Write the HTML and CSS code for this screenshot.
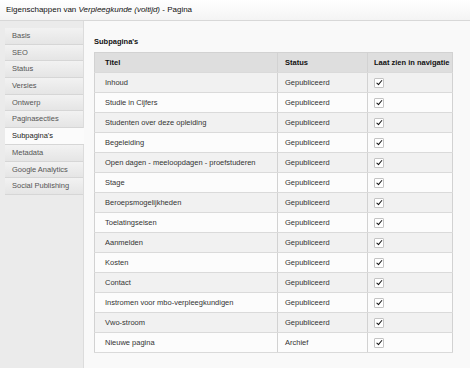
FILE: index.html
```html
<!DOCTYPE html>
<html lang="nl">
<head>
    <meta charset="UTF-8">
    <title>Eigenschappen van Verpleegkunde (voltijd) - Pagina</title>
    <link rel="stylesheet" href="styles.css">
</head>
<body>
    <div class="titlebar">Eigenschappen van <em>Verpleegkunde (voltijd)</em> - Pagina</div>

    <div class="main">
        <div class="sidebar">
            <div class="tab">Basis</div>
            <div class="tab">SEO</div>
            <div class="tab">Status</div>
            <div class="tab">Versies</div>
            <div class="tab">Ontwerp</div>
            <div class="tab">Paginasecties</div>
            <div class="tab active">Subpagina's</div>
            <div class="tab">Metadata</div>
            <div class="tab">Google Analytics</div>
            <div class="tab">Social Publishing</div>
        </div>

        <div class="content">
            <h2>Subpagina's</h2>
            <table class="pages">
                <colgroup>
                    <col class="col-title">
                    <col class="col-status">
                    <col class="col-nav">
                </colgroup>
                <thead>
                    <tr>
                        <th>Titel</th>
                        <th>Status</th>
                        <th>Laat zien in navigatie</th>
                    </tr>
                </thead>
                <tbody>
                    <tr><td>Inhoud</td><td>Gepubliceerd</td><td><span class="check"></span></td></tr>
                    <tr><td>Studie in Cijfers</td><td>Gepubliceerd</td><td><span class="check"></span></td></tr>
                    <tr><td>Studenten over deze opleiding</td><td>Gepubliceerd</td><td><span class="check"></span></td></tr>
                    <tr><td>Begeleiding</td><td>Gepubliceerd</td><td><span class="check"></span></td></tr>
                    <tr><td>Open dagen - meeloopdagen - proefstuderen</td><td>Gepubliceerd</td><td><span class="check"></span></td></tr>
                    <tr><td>Stage</td><td>Gepubliceerd</td><td><span class="check"></span></td></tr>
                    <tr><td>Beroepsmogelijkheden</td><td>Gepubliceerd</td><td><span class="check"></span></td></tr>
                    <tr><td>Toelatingseisen</td><td>Gepubliceerd</td><td><span class="check"></span></td></tr>
                    <tr><td>Aanmelden</td><td>Gepubliceerd</td><td><span class="check"></span></td></tr>
                    <tr><td>Kosten</td><td>Gepubliceerd</td><td><span class="check"></span></td></tr>
                    <tr><td>Contact</td><td>Gepubliceerd</td><td><span class="check"></span></td></tr>
                    <tr><td>Instromen voor mbo-verpleegkundigen</td><td>Gepubliceerd</td><td><span class="check"></span></td></tr>
                    <tr><td>Vwo-stroom</td><td>Gepubliceerd</td><td><span class="check"></span></td></tr>
                    <tr><td>Nieuwe pagina</td><td>Archief</td><td><span class="check"></span></td></tr>
                </tbody>
            </table>
        </div>
    </div>
</body>
</html>
```

FILE: styles.css
```css
body {
    margin: 0;
    font-family: "Liberation Sans", Arial, sans-serif;
    font-size: 7.5px;
    color: #333;
    background: #f9f9f9;
}
.titlebar {
    height: 20px;
    line-height: 20px;
    padding-left: 6px;
    font-size: 8px;
    color: #111;
    background: linear-gradient(#ffffff, #f4f4f4);
    border-bottom: 1px solid #d8d8d8;
}
.main {
    display: flex;
    height: 347px;
}
.sidebar {
    width: 78px;
    padding: 7px 0 0 5px;
    background: #ebebeb;
    border-right: 1px solid #dcdcdc;
}
.tab {
    height: 15.7px;
    line-height: 15.7px;
    padding-left: 7px;
    color: #555;
    background: linear-gradient(#f2f2f2, #e5e5e5);
    border-bottom: 1px solid #d6d6d6;
}
.tab.active {
    background: #fbfbfb;
    color: #222;
    margin-right: -1px;
    position: relative;
}
.content {
    flex: 1;
    padding: 16px 0 0 10px;
}
.content h2 {
    margin: 0 0 5px 0;
    font-size: 7.5px;
    line-height: 10px;
    color: #111;
}
.pages {
    width: 358px;
    table-layout: fixed;
    border-collapse: collapse;
    border: 1px solid #d2d2d2;
}
.col-title {
    width: 183px;
}
.col-status {
    width: 90px;
}
.col-nav {
    width: 85px;
}
.pages th,
.pages td {
    height: 19px;
    padding: 0;
    text-align: left;
    white-space: nowrap;
    border-bottom: 1px solid #dadada;
}
.pages th {
    background: #dedede;
    color: #111;
    font-weight: bold;
}
.pages th:first-child,
.pages td:first-child {
    padding-left: 10px;
}
.pages th:nth-child(2),
.pages td:nth-child(2) {
    padding-left: 7px;
    border-left: 1px solid #d2d2d2;
}
.pages th:nth-child(3),
.pages td:nth-child(3) {
    padding-left: 6px;
    border-left: 1px solid #d2d2d2;
}
.pages tbody tr:nth-child(odd) td {
    background: #f1f1f1;
}
.pages tbody tr:nth-child(even) td {
    background: #fcfcfc;
}
.check {
    display: block;
    width: 8px;
    height: 8px;
    background: #fff;
    border: 1px solid #c4c4c4;
    border-radius: 1px;
    position: relative;
}
.check::after {
    content: "";
    position: absolute;
    left: 2.5px;
    top: 0.5px;
    width: 2px;
    height: 4.5px;
    border: solid #111;
    border-width: 0 1.6px 1.6px 0;
    transform: rotate(40deg);
}
```
